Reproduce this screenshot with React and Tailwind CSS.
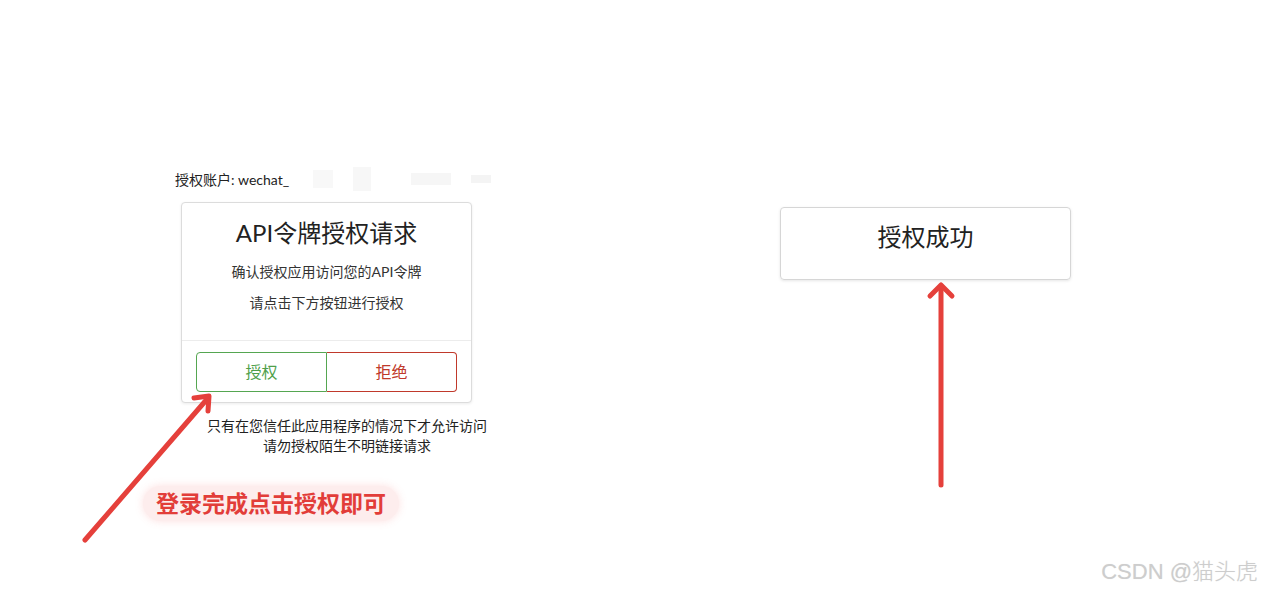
import React from "react";

const font = { fontFamily: 'Lato, "Noto Sans CJK SC", sans-serif' };

function Arrows() {
  return (
    <svg className="absolute inset-0 pointer-events-none" width="1263" height="593">
      <g stroke="#e5403b" strokeWidth="5" strokeLinecap="round" strokeLinejoin="round" fill="none">
        <path d="M85 540 L208 398" />
        <path d="M194 398 L209 396 L208 411" />
        <path d="M941 485 L941 286" />
        <path d="M930 296 L941 285 L952 296" />
      </g>
    </svg>
  );
}

function AuthCard() {
  return (
    <div className="ml-[6px] mt-[15px] w-[291px] rounded-[4px] border border-[#dcdcdc] bg-white shadow-[0_1px_3px_rgba(0,0,0,0.08)]">
      <div className="flex flex-col items-center pt-[15px] pb-[27px] border-b border-[#ececec]">
        <div className="text-[24px] leading-[30px] text-[#222]">API令牌授权请求</div>
        <div className="mt-[14px] text-[14px] leading-[20px] text-[#333]">确认授权应用访问您的API令牌</div>
        <div className="mt-[11px] text-[14px] leading-[20px] text-[#333]">请点击下方按钮进行授权</div>
      </div>
      <div className="flex px-[14px] pt-[11px] pb-[10px]">
        <button className="flex-1 h-[40px] rounded-l-[4px] border border-[#55a651] text-[16px] text-[#4f9f4b]">授权</button>
        <button className="flex-1 h-[40px] rounded-r-[4px] border border-l-0 border-[#c0392b] text-[16px] text-[#c0392b]">拒绝</button>
      </div>
    </div>
  );
}

export default function App() {
  return (
    <div className="relative w-[1263px] h-[593px] bg-white overflow-hidden text-[#333]" style={font}>
      <div className="flex">
        <div className="w-[605px] pl-[175px] pt-[171px] flex flex-col">
          <div className="flex items-center h-[16px] text-[14px] text-[#222]">
            <span>授权账户: wechat_</span>
            <span className="ml-[24px] w-[20px] h-[18px] bg-[#f8f8f8]" />
            <span className="ml-[20px] w-[18px] h-[24px] bg-[#f7f7f7]" />
            <span className="ml-[40px] w-[40px] h-[12px] bg-[#f6f6f6]" />
            <span className="ml-[20px] w-[20px] h-[8px] bg-[#f4f4f4]" />
          </div>
          <AuthCard />
          <div className="ml-[32px] mt-[13px] w-[280px] text-center text-[14px] leading-[20px] text-[#222]">
            <div>只有在您信任此应用程序的情况下才允许访问</div>
            <div>请勿授权陌生不明链接请求</div>
          </div>
          <div className="ml-[-32px] mt-[30px] self-start rounded-full bg-[#fdeded] px-[13px] py-[3px] shadow-[0_0_8px_rgba(253,220,220,0.9)]">
            <span className="text-[23px] leading-[28px] font-bold text-[#e23d39]">登录完成点击授权即可</span>
          </div>
        </div>
        <div className="pl-[175px] pt-[207px]">
          <div className="w-[291px] h-[73px] rounded-[4px] border border-[#d6d6d6] shadow-[0_1px_3px_rgba(0,0,0,0.1)] flex justify-center pt-[14px]">
            <span className="text-[24px] leading-[30px] text-[#222]">授权成功</span>
          </div>
        </div>
      </div>
      <Arrows />
      <div className="absolute right-[5px] bottom-[7px] text-[22px] leading-[28px] font-light text-[#cdcdcd] [text-shadow:0_0_1px_rgba(0,0,0,0.1)]" style={{ fontFamily: '"Liberation Sans", "Noto Sans CJK SC", sans-serif' }}>
        CSDN @猫头虎
      </div>
    </div>
  );
}
